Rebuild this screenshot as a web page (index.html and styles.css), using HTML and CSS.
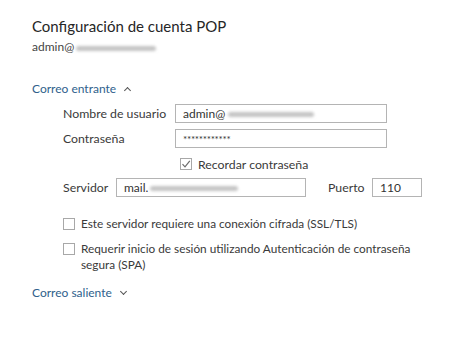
FILE: index.html
```html
<!DOCTYPE html>
<html>
<head>
<meta charset="utf-8">
<link rel="stylesheet" href="styles.css">
</head>
<body>
<div class="page">
  <h1 class="title">Configuración de cuenta POP</h1>
  <div class="account">admin@<span class="blur blur-acc"></span></div>

  <div class="section-head">Correo entrante <span class="chev up"></span></div>

  <div class="form">
    <div class="row">
      <span class="label">Nombre de usuario</span>
      <div class="input wide">admin@<span class="blur blur-user"></span></div>
    </div>
    <div class="row">
      <span class="label">Contraseña</span>
      <div class="input wide pass">************</div>
    </div>
    <div class="remember">
      <span class="cb checked"><svg width="10" height="10" viewBox="0 0 10 10"><path d="M1.5 5.2 L4 7.8 L8.8 1.8" fill="none" stroke="#6b6b6b" stroke-width="1.2"/></svg></span>
      <span>Recordar contraseña</span>
    </div>
    <div class="row server-row">
      <span class="label short">Servidor</span>
      <div class="input server">mail.<span class="blur blur-srv"></span></div>
      <span class="label port-label">Puerto</span>
      <div class="input port">110</div>
    </div>
    <div class="opt">
      <span class="cb"></span>
      <span>Este servidor requiere una conexión cifrada (SSL/TLS)</span>
    </div>
    <div class="opt two">
      <span class="cb"></span>
      <span>Requerir inicio de sesión utilizando Autenticación de contraseña<br>segura (SPA)</span>
    </div>
  </div>

  <div class="section-head out">Correo saliente <span class="chev down"></span></div>
</div>
</body>
</html>
```

FILE: styles.css
```css
html, body {
  margin: 0;
  padding: 0;
  background: #ffffff;
}
body {
  font-family: "Lato", "Open Sans", "Liberation Sans", sans-serif;
  color: #3a3a3a;
  font-size: 12.3px;
}
.page {
  padding: 15px 0 0 32px;
}
.title {
  margin: 0;
  font-size: 15px;
  font-weight: 400;
  color: #262626;
  line-height: 22px;
}
.account {
  margin-top: 2px;
  font-size: 12px;
  line-height: 16px;
  color: #444;
  display: flex;
  align-items: center;
}
.blur {
  display: inline-block;
  height: 5px;
  background: #c4c4c4;
  border-radius: 3px;
  filter: blur(1.5px);
}
.blur-acc { width: 80px; margin-left: 2px; margin-top: 2px; }
.blur-user { width: 86px; margin-left: 3px; margin-top: 2px; }
.blur-srv { width: 88px; margin-left: 2px; margin-top: 2px; }

.section-head {
  margin-top: 26px;
  color: #2f5f8c;
  font-size: 12px;
  line-height: 16px;
  display: flex;
  align-items: center;
}
.chev {
  display: inline-block;
  width: 4px;
  height: 4px;
  border-left: 1.8px solid #555;
  border-top: 1.8px solid #555;
  margin-left: 9px;
}
.chev.up { transform: rotate(45deg); margin-top: 3px; }
.chev.down { transform: rotate(225deg); margin-top: -3px; }

.form {
  padding-left: 31px;
  margin-top: 7px;
}
.row {
  display: flex;
  align-items: center;
  height: 19px;
  margin-bottom: 6px;
}
.label {
  width: 112px;
  flex: none;
}
.label.short { width: 53px; }
.input {
  box-sizing: border-box;
  height: 19px;
  border: 1px solid #b4b4b4;
  padding: 0 7px;
  display: flex;
  align-items: center;
  font-size: 12px;
  color: #333;
}
.input.wide { width: 212px; }
.input.pass { letter-spacing: -0.3px; font-size: 10px; }
.input.server { width: 190px; }
.port-label { width: 44px; margin-left: 22px; }
.input.port { width: 50px; }

.remember {
  display: flex;
  align-items: center;
  margin-left: 117px;
  height: 14px;
  margin-top: 9px;
  margin-bottom: 7px;
}
.cb {
  box-sizing: border-box;
  width: 12px;
  height: 12px;
  border: 1px solid #a8a8a8;
  flex: none;
  margin-right: 6px;
  display: flex;
  align-items: center;
  justify-content: center;
}
.opt {
  display: flex;
  align-items: flex-start;
  margin-top: 19px;
  line-height: 16px;
  font-size: 11.8px;
}
.opt .cb { margin-top: 2px; }
.opt.two { margin-top: 9px; }
.section-head.out { margin-top: 12px; }
```
